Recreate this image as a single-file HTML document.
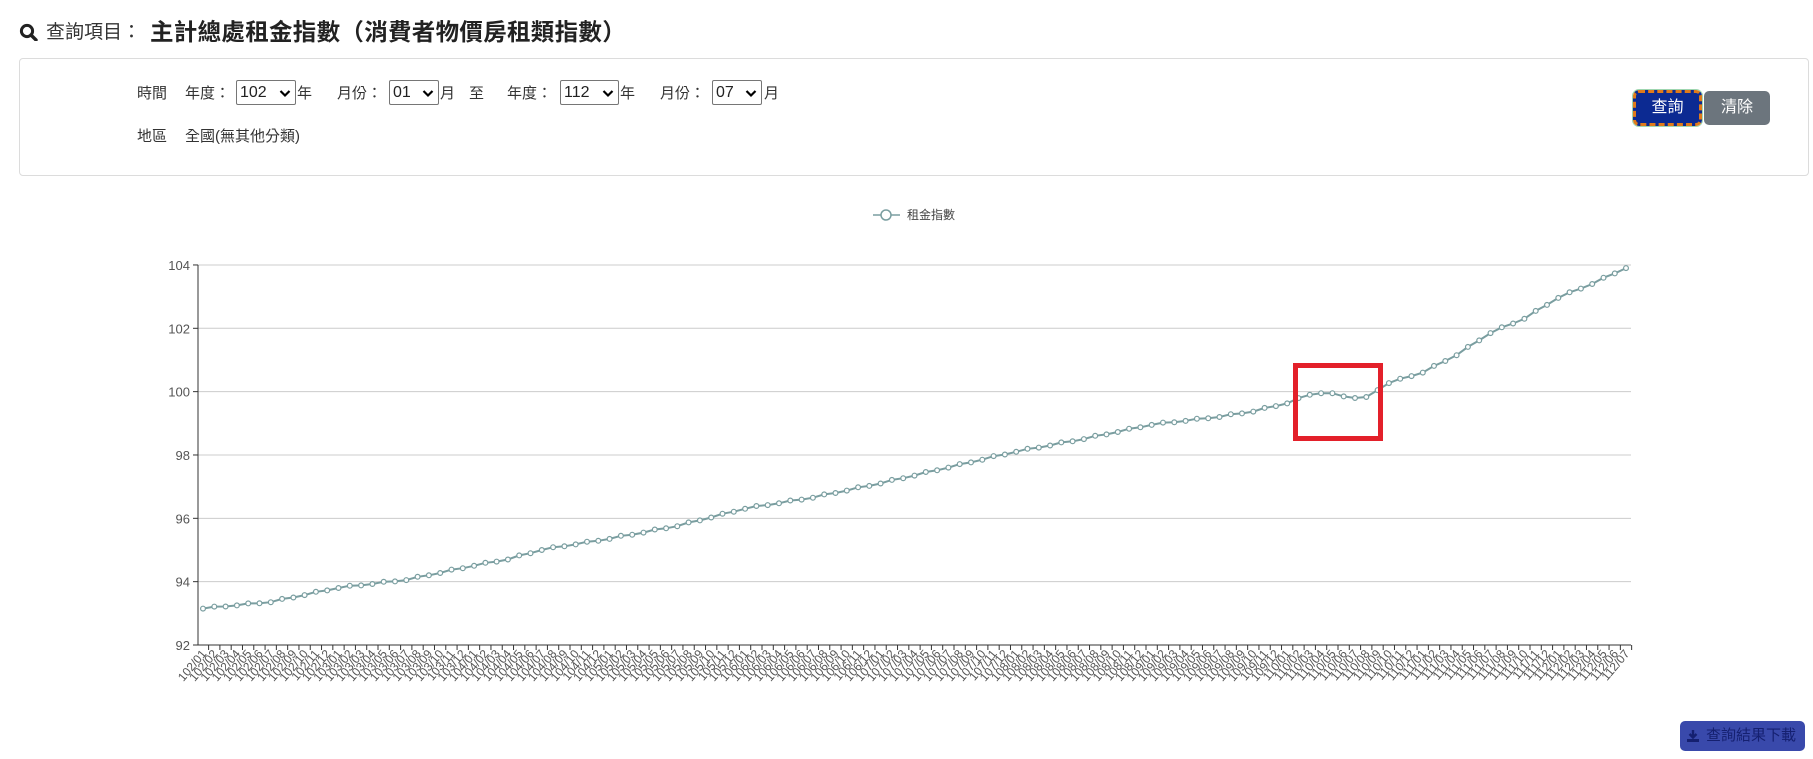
<!DOCTYPE html>
<html><head><meta charset="utf-8">
<style>
body{margin:0;width:1813px;height:759px;background:#fff;font-family:"Liberation Sans","Noto Sans CJK TC",sans-serif;color:#222;position:relative;overflow:hidden}
.abs{position:absolute;white-space:nowrap}
.panel{position:absolute;left:19px;top:58px;width:1788px;height:116px;border:1px solid #dcdcdc;border-radius:4px}
.t{font-size:15px;color:#333}
.sel{position:absolute;top:80px;height:23px;border:1px solid #767676;border-radius:2px;font-size:16px;line-height:23px;padding-left:3px;box-sizing:border-box;height:25px}
.sel svg{position:absolute;right:4px;top:8px}
</style></head><body>
<svg class="abs" style="left:19px;top:23px" width="19" height="18" viewBox="0 0 19 18"><circle cx="8" cy="8" r="5.6" fill="none" stroke="#222" stroke-width="3"/><path d="M12 12 L17 17" stroke="#222" stroke-width="3.4" stroke-linecap="round"/></svg>
<div class="abs" style="left:46px;top:19px;font-size:19px;color:#333;line-height:28px">查詢項目：</div>
<div class="abs" style="left:150px;top:17px;font-size:23.5px;font-weight:bold;color:#222;line-height:30px;letter-spacing:0.3px">主計總處租金指數（消費者物價房租類指數）</div>
<div class="panel"></div>
<div class="abs t" style="left:137px;top:82px">時間</div>
<div class="abs t" style="left:185px;top:82px">年度：</div>
<div class="sel" style="left:236px;width:60px">102<svg width="12" height="9" viewBox="0 0 12 9"><path d="M1.5 2 L6 6.5 L10.5 2" fill="none" stroke="#000" stroke-width="2.2"/></svg></div>
<div class="abs t" style="left:297px;top:82px">年</div>
<div class="abs t" style="left:337px;top:82px">月份：</div>
<div class="sel" style="left:389px;width:50px">01<svg width="12" height="9" viewBox="0 0 12 9"><path d="M1.5 2 L6 6.5 L10.5 2" fill="none" stroke="#000" stroke-width="2.2"/></svg></div>
<div class="abs t" style="left:440px;top:82px">月</div>
<div class="abs t" style="left:469px;top:82px">至</div>
<div class="abs t" style="left:507px;top:82px">年度：</div>
<div class="sel" style="left:560px;width:59px">112<svg width="12" height="9" viewBox="0 0 12 9"><path d="M1.5 2 L6 6.5 L10.5 2" fill="none" stroke="#000" stroke-width="2.2"/></svg></div>
<div class="abs t" style="left:620px;top:82px">年</div>
<div class="abs t" style="left:660px;top:82px">月份：</div>
<div class="sel" style="left:712px;width:50px">07<svg width="12" height="9" viewBox="0 0 12 9"><path d="M1.5 2 L6 6.5 L10.5 2" fill="none" stroke="#000" stroke-width="2.2"/></svg></div>
<div class="abs t" style="left:764px;top:82px">月</div>
<div class="abs t" style="left:137px;top:125px">地區</div>
<div class="abs t" style="left:185px;top:125px">全國(無其他分類)</div>
<div class="abs" style="left:1633px;top:90px;width:69px;height:36px;box-sizing:border-box;border:3px dashed #e07a1a;outline:1px solid #9fd6b0;border-radius:6px;background:#0c2a92;color:#fff;font-size:16px;text-align:center;line-height:30px">查詢</div>
<div class="abs" style="left:1704px;top:91px;width:66px;height:34px;border-radius:5px;background:#6c757d;color:#fff;font-size:16px;text-align:center;line-height:34px">清除</div>
<div class="abs" style="left:1680px;top:721px;width:125px;height:30px;border-radius:5px;background:#3949ab;color:#152070;font-size:15px;line-height:30px">
<svg style="position:absolute;left:6px;top:8px" width="14" height="14" viewBox="0 0 14 14"><path d="M7 1 V8 M3.5 5 L7 8.5 L10.5 5" stroke="#152070" stroke-width="2.4" fill="none"/><rect x="1" y="10" width="12" height="3" fill="#152070"/></svg>
<span style="position:absolute;left:26px">查詢結果下載</span></div>
<svg id="ch" class="abs" style="left:0;top:190px" width="1813" height="520"></svg>
<script>
(function(){
var s=document.getElementById('ch'),oy=190,h='';
function Y(v){return 645-(v-92)*31.67-oy;}
for(var i=0;i<=6;i++){var v=92+i*2,y=Y(v);
 if(i>0)h+='<line x1="198" x2="1631" y1="'+y+'" y2="'+y+'" stroke="#ccc"/>';
 h+='<line x1="193" x2="198" y1="'+y+'" y2="'+y+'" stroke="#333"/>';
 h+='<text x="190" y="'+(y+5)+'" text-anchor="end" font-size="13" fill="#555" font-family="Liberation Sans">'+v+'</text>';}
h+='<line x1="198" x2="198" y1="'+Y(104)+'" y2="'+Y(92)+'" stroke="#333"/>';
h+='<line x1="198" x2="1631" y1="'+Y(92)+'" y2="'+Y(92)+'" stroke="#333"/>';
var k=[[0,93.15],[6,93.35],[12,93.8],[18,94.05],[24,94.5],[27,94.7],[30,95.0],[36,95.35],[42,95.75],[48,96.3],[54,96.65],[60,97.1],[66,97.6],[72,98.1],[78,98.5],[84,98.95],[90,99.2],[93,99.37],[96,99.63],[98,99.9],[99,99.95],[100,99.92],[101,99.85],[102,99.8],[103,99.8],[104,100.05],[105,100.27],[108,100.6],[111,101.15],[114,101.85],[117,102.3],[120,102.96],[123,103.4],[126,103.9]];
function val(i){for(var j=0;j<k.length-1;j++){if(i>=k[j][0]&&i<=k[j+1][0]){var t=(i-k[j][0])/(k[j+1][0]-k[j][0]);return k[j][1]+t*(k[j+1][1]-k[j][1]);}}return 103.9;}
var pts=[],c='',lab='';
for(var i=0;i<127;i++){var x=203+i*11.294,y=Y(val(i)+(i%3==1?0.03:0));pts.push(x.toFixed(1)+','+y.toFixed(1));
 c+='<circle cx="'+x.toFixed(1)+'" cy="'+y.toFixed(1)+'" r="2.4" fill="#fff" stroke="#7a9ea0" stroke-width="1.2"/>';
 var tx=x+5.6;h+='<line x1="'+tx+'" x2="'+tx+'" y1="'+Y(92)+'" y2="'+(Y(92)+5)+'" stroke="#333"/>';
 var yr=102+Math.floor(i/12),m=(i%12)+1,ly=Y(92)+9;
 lab+='<text transform="translate('+(x+4)+','+ly+') rotate(-50)" text-anchor="end" font-size="12" fill="#555" font-family="Liberation Sans">'+yr+'/'+(m<10?'0'+m:m)+'</text>';}
h+='<polyline points="'+pts.join(' ')+'" fill="none" stroke="#7a9ea0" stroke-width="2"/>'+c+lab;
h+='<line x1="873" x2="900" y1="25" y2="25" stroke="#7a9ea0" stroke-width="1.5"/><circle cx="886" cy="25" r="5" fill="#fff" stroke="#7a9ea0" stroke-width="1.5"/>';
h+='<text x="907" y="29" font-size="12" fill="#444" font-family="Liberation Sans,Noto Sans CJK TC,sans-serif">租金指數</text>';
h+='<rect x="1295.5" y="'+(365.5-oy)+'" width="85" height="73" fill="none" stroke="#e3202a" stroke-width="5"/>';
s.innerHTML=h;})();
</script>
</body></html>
